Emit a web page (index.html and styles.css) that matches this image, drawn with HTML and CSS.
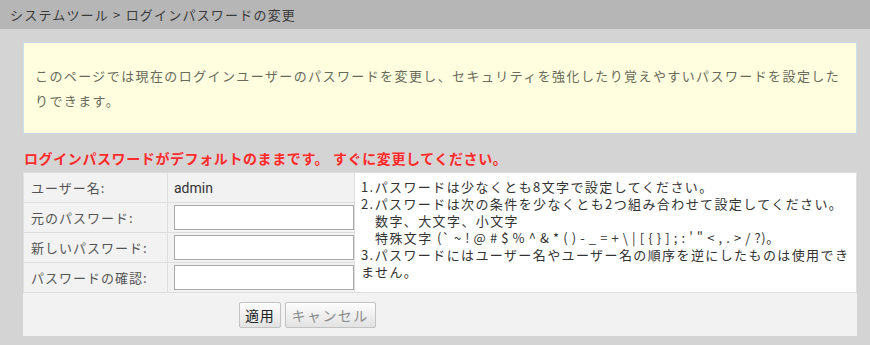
FILE: index.html
```html
<!DOCTYPE html>
<html lang="ja">
<head>
    <meta charset="UTF-8">
    <meta name="viewport" content="width=device-width, initial-scale=1.0">
    <title>ログインパスワードの変更</title>
    <link rel="stylesheet" href="styles.css">
</head>
<body>
    <div class="crumb">システムツール &gt; ログインパスワードの変更</div>

    <div class="content">
        <div class="info-box">
            このページでは現在のログインユーザーのパスワードを変更し、セキュリティを強化したり覚えやすいパスワードを設定したりできます。
        </div>

        <div class="warn">ログインパスワードがデフォルトのままです。 すぐに変更してください。</div>

        <table class="pw-table">
            <tr>
                <td class="label">ユーザー名:</td>
                <td class="value">admin</td>
                <td class="notes" rowspan="4">
                    <div>1.パスワードは少なくとも8文字で設定してください。</div>
                    <div>2.パスワードは次の条件を少なくとも2つ組み合わせて設定してください。</div>
                    <div class="indent">数字、大文字、小文字</div>
                    <div class="indent">特殊文字 <span class="symbols">(` ~ ! @ # $ % ^ &amp; * ( ) - _ = + \ | [ { } ] ; : ' " &lt; , . &gt; / ?)</span>。</div>
                    <div>3.パスワードにはユーザー名やユーザー名の順序を逆にしたものは使用でき</div>
                    <div>ません。</div>
                </td>
            </tr>
            <tr>
                <td class="label">元のパスワード:</td>
                <td class="value"><input type="password" class="pw-input"></td>
            </tr>
            <tr>
                <td class="label">新しいパスワード:</td>
                <td class="value"><input type="password" class="pw-input"></td>
            </tr>
            <tr>
                <td class="label">パスワードの確認:</td>
                <td class="value"><input type="password" class="pw-input"></td>
            </tr>
        </table>

        <div class="actions">
            <button class="btn">適用</button>
            <button class="btn btn-cancel">キャンセル</button>
        </div>
    </div>
</body>
</html>
```

FILE: styles.css
```css
body {
    margin: 0;
    background: #d4d4d4;
    font-family: "Noto Sans CJK JP", "Liberation Sans", sans-serif;
    font-size: 13px;
    color: #333;
}

.crumb {
    height: 29px;
    line-height: 29px;
    padding-left: 10px;
    background: #b6b6b6;
    color: #3a3a3a;
    font-size: 13px;
    letter-spacing: 1.2px;
}

.content {
    padding: 13px 13px 9px 23px;
}

.info-box {
    background: #ffffe0;
    border: 1px solid #cbdde6;
    padding: 20px 12px 20px 11px;
    line-height: 25px;
    color: #6a6a5a;
    letter-spacing: 1.4px;
}

.warn {
    padding-top: 10px;
    line-height: 28px;
    color: #ff2a2a;
    font-size: 14px;
    font-weight: bold;
    padding-left: 1px;
    letter-spacing: 0.6px;
}

.pw-table {
    width: 100%;
    border-collapse: collapse;
    background: #f2f2f2;
}

.pw-table td {
    border: 1px solid #dedede;
    padding: 0;
}

.label {
    width: 136px;
    height: 29px;
    padding-left: 7px !important;
    color: #555;
    letter-spacing: 1px;
}

.value {
    width: 179px;
    padding-left: 6px !important;
    font-family: Roboto, "Liberation Sans", sans-serif;
    font-size: 14px;
    color: #333;
}

.pw-input {
    box-sizing: border-box;
    width: 180px;
    height: 25px;
    margin: 0;
    border: 1px solid #a9a9a9;
    background: #fff;
    display: block;
}

.notes {
    background: #fff;
    vertical-align: top;
    padding: 5px 6px 0 6px !important;
    line-height: 17px;
    font-size: 13px;
    color: #333;
    letter-spacing: 1.4px;
    white-space: nowrap;
}

.indent {
    padding-left: 14px;
}

.symbols {
    letter-spacing: 0.6px;
}

.actions {
    background: #f2f2f2;
    height: 43px;
    padding-left: 216px;
    display: flex;
    align-items: center;
    gap: 4px;
}

.btn {
    height: 26px;
    padding: 0 5px;
    border: 1px solid #c3c3c3;
    border-radius: 2px;
    background: linear-gradient(#fdfdfd, #e2e2e2);
    font-family: "Noto Sans CJK JP", sans-serif;
    font-size: 14px;
    color: #222;
    letter-spacing: 0.8px;
}

.btn-cancel {
    color: #8c8c8c;
    padding: 0 6px;
    letter-spacing: 1.4px;
}
```
